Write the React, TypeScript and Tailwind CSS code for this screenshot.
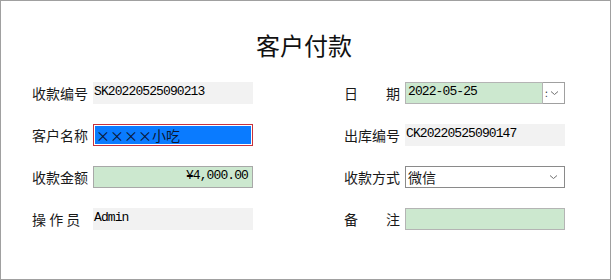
import React from 'react';

const cjk = { fontFamily: '"Noto Sans CJK SC", "Noto Sans", sans-serif' };
const mono = { fontFamily: '"Liberation Mono", "Noto Sans CJK SC", monospace' };

const Chevron = () => (
  <svg width="9" height="6" viewBox="0 0 9 6" className="shrink-0">
    <path d="M1 1.5 L4.5 4.5 L8 1.5" fill="none" stroke="#707070" strokeWidth="1" />
  </svg>
);

const Label = ({ text }: { text: string }) => (
  <span className="w-[61px] shrink-0 text-[14px] leading-[22px] text-[#1a1a1a] whitespace-pre" style={cjk}>
    {text}
  </span>
);

const ReadOnly = ({ value }: { value: string }) => (
  <div className="flex h-[22px] w-[160px] items-center bg-[#f2f2f2] pb-[3px] pl-[1px] text-[13px] tracking-[-0.9px] text-black" style={mono}>
    {value}
  </div>
);

export default function App() {
  return (
    <div className="w-[611px] h-[280px] border border-[#a0a0a0] bg-white" style={cjk}>
      <h1 className="pt-[32px] text-center text-[24px] leading-[24px] text-[#111] pr-[3px]">客户付款</h1>
      <div className="ml-[31px] mt-[25px] grid grid-cols-[221px_222px] gap-x-[91px] gap-y-[20px]">
        {/* row 1 */}
        <div className="flex items-center">
          <Label text="收款编号" />
          <ReadOnly value="SK20220525090213" />
        </div>
        <div className="flex items-center">
          <Label text="日　　期" />
          <div className="flex h-[22px] w-[138px] items-center border border-[#b4b4b4] bg-[#cce8cf] pb-[3px] pl-[2px] text-[13px] tracking-[-0.9px] text-black" style={mono}>
            2022-05-25
          </div>
          <div className="flex h-[22px] w-[22px] items-center gap-[2px] border border-l-0 border-[#a0a0a0] bg-white pl-[2px]">
            <span className="text-[10px] leading-none text-[#333]">:</span>
            <Chevron />
          </div>
        </div>

        {/* row 2 */}
        <div className="flex items-center">
          <Label text="客户名称" />
          <div className="h-[22px] w-[160px] border border-[#c8323c] p-[1px]">
            <div className="flex h-full items-center bg-[#0a7bff] pl-[1px] text-[14px] text-[#0b1530]" style={cjk}>
              ××××小吃
            </div>
          </div>
        </div>
        <div className="flex items-center">
          <Label text="出库编号" />
          <ReadOnly value="CK20220525090147" />
        </div>

        {/* row 3 */}
        <div className="flex items-center">
          <Label text="收款金额" />
          <div className="flex h-[22px] w-[160px] items-center justify-end border border-[#a8a8a8] bg-[#cce8cf] pb-[3px] pr-[4px] text-[13px] tracking-[-0.9px] text-black" style={mono}>
            ¥4,000.00
          </div>
        </div>
        <div className="flex items-center">
          <Label text="收款方式" />
          <div className="flex h-[22px] w-[160px] items-center justify-between border border-[#8a8a8a] bg-white pl-[2px] pr-[6px] text-[14px] text-[#1a1a1a]" style={cjk}>
            <span>微信</span>
            <Chevron />
          </div>
        </div>

        {/* row 4 */}
        <div className="flex items-center">
          <Label text="操 作 员" />
          <ReadOnly value="Admin" />
        </div>
        <div className="flex items-center">
          <Label text="备　　注" />
          <div className="h-[22px] w-[160px] border border-[#b4b4b4] bg-[#cce8cf]" />
        </div>
      </div>
    </div>
  );
}
